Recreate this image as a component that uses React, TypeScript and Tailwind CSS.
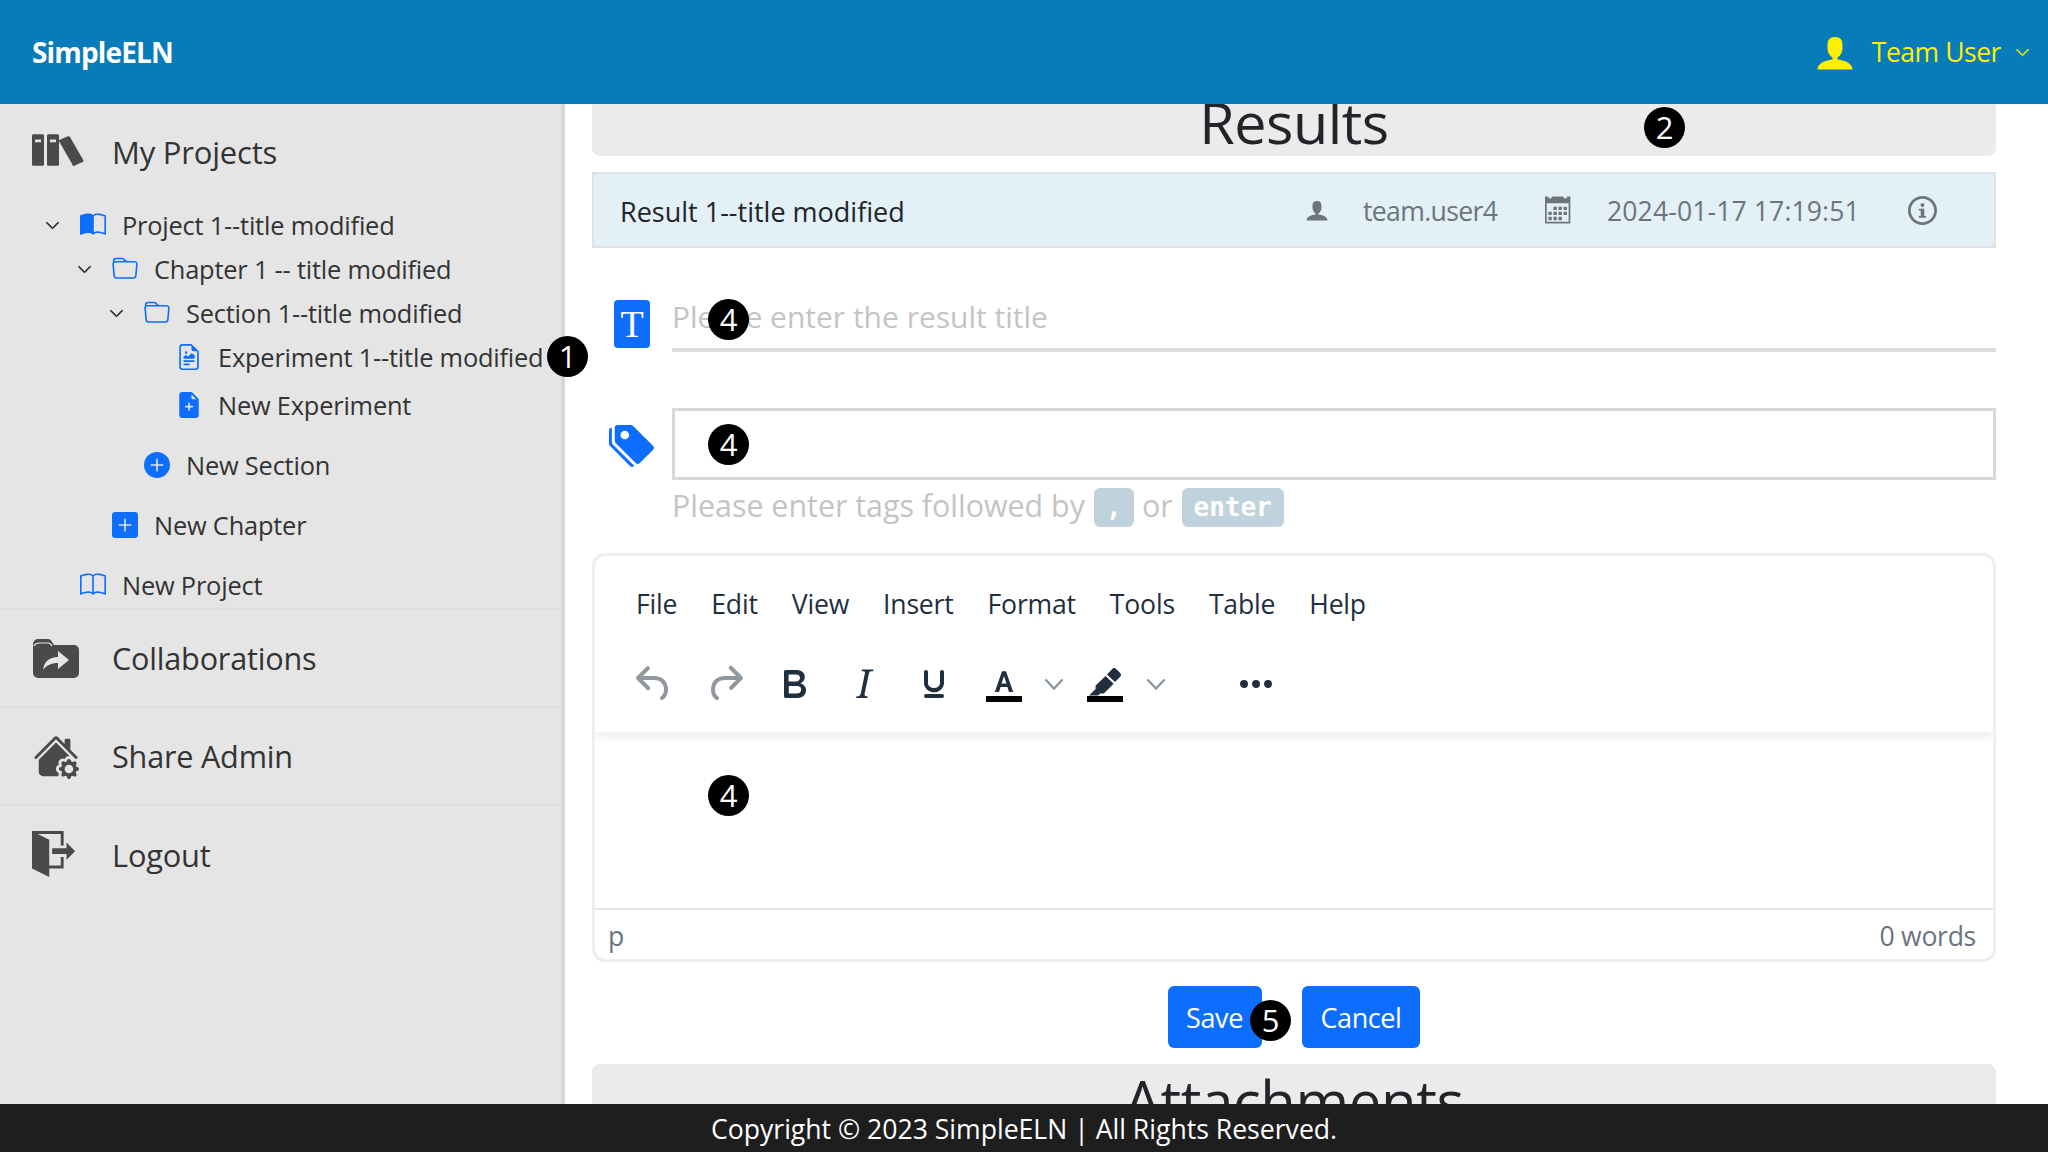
import React from "react";
import { BsBook, BsBookHalf, BsChevronDown, BsFileEarmarkPlusFill, BsFileEarmarkRichtext, BsFolder, BsHouseGearFill, BsPlusCircleFill, BsPlusSquareFill, BsTagsFill } from "react-icons/bs";
import { ImBooks, ImCalendar, ImExit, ImInfo, ImUser } from "react-icons/im";

const Badge = ({ n, pos }: { n: string; pos: string }) => (
  <div className={`absolute flex h-[41px] w-[41px] items-center justify-center rounded-full bg-black text-[31px] leading-none text-white ${pos}`}>{n}</div>
);

const TreeRow = ({ pad, open, icon, text, cls = "" }: { pad: string; open?: boolean; icon: React.ReactNode; text: string; cls?: string }) => (
  <div className={`flex h-[44px] items-center ${pad} ${cls}`}>
    {open !== undefined && (
      <div className="flex w-[34px] items-center">
        <BsChevronDown className="ml-[-1px] h-[15px] w-[15px] text-[#212529]" strokeWidth={0.8} />
      </div>
    )}
    <div className="flex w-[42px] items-center text-[#0d6efd]">{icon}</div>
    <span className="whitespace-nowrap text-[25.4px] tracking-[-0.2px] text-[#333]">{text}</span>
  </div>
);

const NavRow = ({ icon, text, cls }: { icon: React.ReactNode; text: string; cls: string }) => (
  <div className={`flex items-center border-b-2 border-[#e0e0e0] pl-[32px] ${cls}`}>
    <div className="flex w-[80px] items-center text-[#4a4a4a]">{icon}</div>
    <span className="pt-[2px] text-[30.6px] tracking-[-0.2px] text-[#333]">{text}</span>
  </div>
);

const Tiny = ({ d, cls = "text-[#222f3e]" }: { d: string; cls?: string }) => (
  <svg viewBox="0 0 24 24" className={`h-[48px] w-[48px] fill-current ${cls}`}><path d={d} /></svg>
);

const Chev = () => (
  <svg viewBox="0 0 20 12" className="h-[12px] w-[20px] fill-none stroke-[#8b95a0] stroke-[2.4]"><path d="M1.5 1.5 10 10.5 18.5 1.5" /></svg>
);

const tool = "flex h-[48px] items-center justify-center";
const menu = ["File", "Edit", "View", "Insert", "Format", "Tools", "Table", "Help"];

export default function App() {
  return (
    <div className="relative flex h-screen flex-col overflow-hidden bg-white font-['Open_Sans',sans-serif]">
      <header className="z-10 flex h-[104px] shrink-0 items-center justify-between bg-[#087bb9] pl-[32px] pr-[18px]">
        <span className="text-[28px] font-bold tracking-[-0.85px] text-white">SimpleELN</span>
        <div className="flex items-center text-[#fff000]">
          <ImUser className="h-[40px] w-[40px]" />
          <span className="ml-[17px] pt-[2px] text-[26.5px] tracking-[-0.45px]">Team User</span>
          <BsChevronDown className="ml-[14px] h-[15px] w-[15px]" strokeWidth={0.6} />
        </div>
      </header>

      <div className="flex min-h-0 flex-1">
        <aside className="w-[565px] shrink-0 border-r-[4px] border-[#d8d8d8] bg-[#e5e5e5]">
          <div className="flex h-[92px] items-center pl-[32px]">
            <div className="flex w-[80px] items-center text-[#4a4a4a]"><ImBooks preserveAspectRatio="none" className="h-[42px] w-[54px]" /></div>
            <span className="pt-[5px] text-[31px] tracking-[-0.2px] text-[#333]">My Projects</span>
          </div>
          <div className="border-b-2 border-[#e0e0e0] pt-[7px] pb-[1px] pr-0">
            <TreeRow pad="pl-[46px]" open icon={<BsBookHalf className="h-[26px] w-[26px]" />} text="Project 1--title modified" />
            <TreeRow pad="pl-[78px]" open icon={<BsFolder className="h-[26px] w-[26px]" />} text="Chapter 1 -- title modified" />
            <TreeRow pad="pl-[110px]" open icon={<BsFolder className="h-[26px] w-[26px]" />} text="Section 1--title modified" />
            <TreeRow pad="pl-[176px]" icon={<BsFileEarmarkRichtext className="h-[26px] w-[26px]" />} text="Experiment 1--title modified" />
            <TreeRow pad="pl-[176px]" cls="mt-[4px]" icon={<BsFileEarmarkPlusFill className="h-[26px] w-[26px]" />} text="New Experiment" />
            <TreeRow pad="pl-[144px]" cls="mt-[16px]" icon={<BsPlusCircleFill className="h-[26px] w-[26px]" />} text="New Section" />
            <TreeRow pad="pl-[112px]" cls="mt-[16px]" icon={<BsPlusSquareFill className="h-[26px] w-[26px]" />} text="New Chapter" />
            <TreeRow pad="pl-[80px]" cls="mt-[16px]" icon={<BsBook className="h-[26px] w-[26px]" />} text="New Project" />
          </div>
          <NavRow
            cls="h-[98px]"
            icon={
              <svg viewBox="0 0 46 39" className="ml-[1px] h-[39px] w-[46px]">
                <path fill="#4a4a4a" d="M0 34V5a5 5 0 0 1 5-5h10c2 0 3 1 4 3l2 3h20a5 5 0 0 1 5 5v23a5 5 0 0 1-5 5H5a5 5 0 0 1-5-5Z" />
                <path fill="none" stroke="#e5e5e5" strokeWidth="1.2" d="M1 7c1-2 3-3 5-3h9c2 0 3 1 4 3" />
                <path fill="#e5e5e5" d="M10 31c1-8 6-13 15-13v-6l11 9-11 9v-6c-7 0-11 2-15 7Z" />
              </svg>
            }
            text="Collaborations"
          />
          <NavRow cls="h-[98px]" icon={<BsHouseGearFill className="h-[46px] w-[48px]" />} text="Share Admin" />
          <div className="flex h-[96px] items-center pl-[32px]">
            <div className="flex w-[80px] items-center text-[#4a4a4a]"><ImExit className="h-[46px] w-[46px]" /></div>
            <span className="pt-[2px] text-[30.8px] tracking-[-0.2px] text-[#333]">Logout</span>
          </div>
        </aside>

        <main className="min-w-0 flex-1 overflow-hidden pl-[27px] pr-[52px]">
          <div className="mt-[-40px] flex h-[92px] justify-center overflow-hidden rounded-b-[8px] bg-[#ebebeb]">
            <h2 className="mt-[16px] text-[57.5px] leading-[84px] tracking-[-0.5px] text-[#212529]">Results</h2>
          </div>

          <div className="mt-[16px] flex h-[76px] items-center border-2 border-[#dee2e6] bg-[#e3f0f6] pl-[26px]">
            <span className="w-[684px] pt-[4px] text-[27px] text-[#212529]">Result 1--title modified</span>
            <ImUser className="h-[24px] w-[26px] text-[#6c757d]" />
            <span className="ml-[33px] w-[183px] pt-[4px] text-[26.6px] tracking-[-0.65px] text-[#6c757d]">team.user4</span>
            <ImCalendar className="ml-[-1px] h-[28px] w-[27px] text-[#6c757d]" />
            <span className="ml-[35px] w-[301px] pt-[4px] text-[26.6px] tracking-[0.1px] text-[#6c757d]">2024-01-17 17:19:51</span>
            <ImInfo className="h-[29px] w-[29px] text-[#6c757d]" />
          </div>

          <div className="mt-[48px] flex h-[56px] items-start">
            <div className="flex w-[80px] justify-start pl-[22px]">
              <div className="mt-[4px] flex h-[48px] w-[36px] items-center justify-center rounded-[4px] bg-[#0d6efd] font-['Liberation_Serif',serif] text-[38px] leading-none text-white">T</div>
            </div>
            <div className="flex h-[56px] flex-1 items-center border-b-[4px] border-[#dddddd] pb-[12px] text-[30px] text-[#c4c4c4]">Please enter the result title</div>
          </div>

          <div className="mt-[56px] flex">
            <div className="w-[80px] pl-[16px] pt-[14px] text-[#0d6efd]"><BsTagsFill className="h-[46px] w-[48px]" /></div>
            <div className="h-[72px] flex-1 border-[3px] border-[#d8d8d8]" />
          </div>

          <div className="ml-[80px] mt-[7px] flex h-[40px] items-center text-[30.4px] text-[#c4c4c4]">
            <span className="mt-[-2px]">Please enter tags followed by</span>
            <span className="ml-[9px] flex h-[39px] w-[40px] items-center justify-center rounded-[6px] bg-[#c0d2dc] font-['DejaVu_Sans_Mono',monospace] text-[26px] font-bold text-white">,</span>
            <span className="ml-[8px] mt-[-2px]">or</span>
            <span className="ml-[9px] flex h-[39px] w-[102px] items-center justify-center rounded-[6px] bg-[#c0d2dc] font-['DejaVu_Sans_Mono',monospace] text-[26px] font-semibold text-white">enter</span>
          </div>

          <div className="mt-[26px] flex h-[409px] flex-col overflow-hidden rounded-[13px] border-[3px] border-[#eeeeee]">
            <div className="z-[1] h-[176px] shrink-0 shadow-[0_4px_10px_rgba(34,47,62,0.1)]">
              <div className="flex h-[76px] items-center gap-[34px] pl-[41px] pt-[21px] text-[26.6px] tracking-[-0.2px] text-[#222f3e]">
                {menu.map((m) => <span key={m}>{m}</span>)}
              </div>
              <div className="mt-[28px] flex items-center pl-[35px]">
                <div className={`${tool} w-[48px]`}><Tiny cls="text-[#90979f]" d="M6.4 8H12c3.7 0 6.2 2 6.8 5.1.6 2.7-.4 5.6-2.3 6.8a1 1 0 0 1-1-1.8c1.1-.6 1.8-2.7 1.4-4.6-.5-2.1-2.1-3.5-4.9-3.5H6.4l3.3 3.3a1 1 0 1 1-1.4 1.4l-5-5a1 1 0 0 1 0-1.4l5-5a1 1 0 0 1 1.4 1.4L6.4 8Z" /></div>
                <div className={`${tool} ml-[23px] w-[48px]`}><Tiny cls="text-[#90979f]" d="M17.6 10H12c-2.8 0-4.4 1.4-4.9 3.5-.4 2 .3 4 1.4 4.6a1 1 0 1 1-1 1.8c-2-1.2-2.9-4.1-2.3-6.8.6-3 3-5.1 6.8-5.1h5.6l-3.3-3.3a1 1 0 1 1 1.4-1.4l5 5a1 1 0 0 1 0 1.4l-5 5a1 1 0 0 1-1.4-1.4l3.3-3.3Z" /></div>
                <div className={`${tool} ml-[21px] w-[48px]`}><Tiny d="M7.8 19c-.3 0-.5 0-.6-.2l-.2-.5V5.7c0-.2 0-.4.2-.5l.6-.2h5c1.5 0 2.7.3 3.5 1 .7.6 1.1 1.4 1.1 2.5a3 3 0 0 1-.6 1.9c-.4.6-1 1-1.6 1.2.4.1.9.3 1.3.6s.8.7 1 1.2c.4.4.5 1 .5 1.6 0 1.3-.4 2.3-1.3 3-.8.7-2.1 1-3.8 1H7.8Zm5-8.3c.6 0 1.2-.1 1.6-.5.4-.3.6-.7.6-1.3 0-1.1-.8-1.7-2.3-1.7H9.3v3.5h3.4Zm.5 6c.7 0 1.3-.1 1.7-.4.4-.4.6-.9.6-1.5s-.2-1-.7-1.4c-.4-.3-1-.4-2-.4H9.4v3.8h4Z" /></div>
                <div className={`${tool} ml-[22px] w-[48px]`}><Tiny d="m16.7 4.7-.1.9h-.3c-.6 0-1 0-1.4.3-.3.3-.4.6-.5 1.1l-2.1 9.8v.6c0 .5.4.8 1.4.8h.2l-.2.8H8l.2-.8h.2c1.1 0 1.8-.5 2-1.5l2-9.8.1-.5c0-.6-.4-.8-1.4-.8h-.3l.2-.9h5.8Z" /></div>
                <div className={`${tool} ml-[22px] w-[48px]`}><Tiny d="M16 5c.6 0 1 .4 1 1v5.5a4 4 0 0 1-.4 1.8l-1 1.4a5.3 5.3 0 0 1-5.5 1 5 5 0 0 1-1.6-1c-.5-.4-.8-.9-1.1-1.4a4 4 0 0 1-.4-1.8V6c0-.6.4-1 1-1s1 .4 1 1v5.5c0 .3 0 .6.2 1l.6.7a3.3 3.3 0 0 0 2.2.8 3.4 3.4 0 0 0 2.2-.8c.3-.2.4-.5.6-.8l.2-.9V6c0-.6.4-1 1-1ZM8 17h8c.6 0 1 .4 1 1s-.4 1-1 1H8a1 1 0 0 1 0-2Z" /></div>
                <div className={`${tool} ml-[22px] w-[48px]`}>
                  <svg viewBox="0 0 24 24" className="h-[48px] w-[48px]"><path fill="#222f3e" d="M7.4 16 11 5.6h2L16.6 16h-2.1l-.8-2.5h-3.4L9.5 16H7.4Zm3.4-4.2h2.4L12 8l-1.2 3.8Z" /><path d="M3 18h18v3H3z" fill="#000" /></svg>
                </div>
                <div className={`${tool} ml-[16px] w-[20px]`}><Chev /></div>
                <div className={`${tool} ml-[17px] w-[48px]`}>
                  <svg viewBox="0 0 24 24" className="h-[48px] w-[48px]"><path fill="#222f3e" d="M15.6 4.5c.5-.6 1.4-.6 2 0l2 2c.5.5.5 1.4 0 1.9L17 11 13 7.2l2.6-2.7ZM12.3 8l4 3.9-4.9 4.8H9.6l-1.1 1.1H4l3.3-3.3v-1.8L12.3 8Z" /><path d="M3 18h18v3H3z" fill="#000" /></svg>
                </div>
                <div className={`${tool} ml-[17px] w-[20px]`}><Chev /></div>
                <div className={`${tool} ml-[66px] w-[48px]`}><Tiny d="M6 10a2 2 0 0 0-2 2c0 1.1.9 2 2 2a2 2 0 0 0 2-2 2 2 0 0 0-2-2Zm12 0a2 2 0 0 0-2 2c0 1.1.9 2 2 2a2 2 0 0 0 2-2 2 2 0 0 0-2-2Zm-6 0a2 2 0 0 0-2 2c0 1.1.9 2 2 2a2 2 0 0 0 2-2 2 2 0 0 0-2-2Z" /></div>
              </div>
            </div>
            <div className="flex-1" />
            <div className="flex h-[51px] shrink-0 items-center justify-between border-t-[2px] border-[#e3e3e3] pl-[13px] pr-[17px] pt-[4px] text-[26.6px] tracking-[-0.3px] text-[#6b7480]">
              <span>p</span>
              <span>0 words</span>
            </div>
          </div>

          <div className="mt-[24px] flex h-[62px] justify-center gap-[40px]">
            <button className="h-[62px] w-[94px] rounded-[6px] bg-[#0d6efd] pr-[1px] pt-[3px] text-[27px] tracking-[-0.4px] text-white">Save</button>
            <button className="h-[62px] w-[118px] rounded-[6px] bg-[#0d6efd] pt-[3px] text-[27px] tracking-[-0.4px] text-white">Cancel</button>
          </div>

          <div className="mt-[16px] flex h-[92px] justify-center rounded-t-[8px] bg-[#ebebeb]">
            <h2 className="mt-[-5px] text-[58px] leading-[84px] tracking-[-0.4px] text-[#212529]">Attachments</h2>
          </div>
        </main>
      </div>

      <footer className="z-10 flex h-[48px] shrink-0 items-center justify-center bg-[#1e1e1e] pt-[4px] text-[26.6px] text-white">
        Copyright © 2023 SimpleELN | All Rights Reserved.
      </footer>

      <Badge n="1" pos="left-[547px] top-[336px]" />
      <Badge n="2" pos="left-[1644px] top-[107px]" />
      <Badge n="4" pos="left-[708px] top-[299px]" />
      <Badge n="4" pos="left-[708px] top-[424px]" />
      <Badge n="4" pos="left-[708px] top-[775px]" />
      <Badge n="5" pos="left-[1250px] top-[1000px]" />
    </div>
  );
}
